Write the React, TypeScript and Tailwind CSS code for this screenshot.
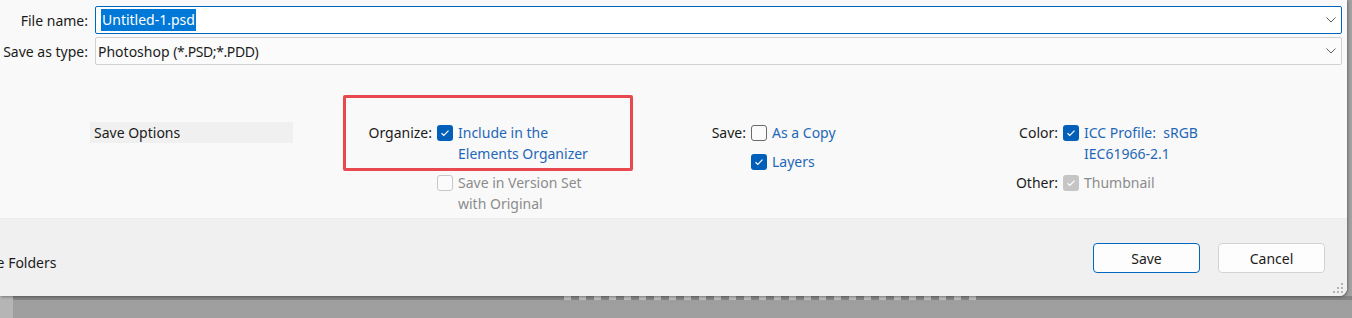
import type { ReactNode } from "react";

const font = { fontFamily: '"Noto Sans", "Open Sans", Arial, sans-serif' };

function Chevron() {
  return (
    <svg width="10" height="6" viewBox="0 0 10 6" className="text-[#5f5f5f]">
      <path d="M0.5 0.5 L5 5 L9.5 0.5" fill="none" stroke="currentColor" strokeWidth="1" />
    </svg>
  );
}

function CheckBox({ checked, disabled }: { checked?: boolean; disabled?: boolean }) {
  if (checked) {
    return (
      <span
        className={`mt-[2.5px] flex h-4 w-4 shrink-0 items-center justify-center rounded-[3px] ${
          disabled ? "bg-[#c5c5c5]" : "bg-[#005fb8]"
        }`}
      >
        <svg width="10" height="8" viewBox="0 0 10 8">
          <path d="M1.5 4.2 L3.8 6.4 L8.5 1.6" fill="none" stroke="white" strokeWidth="1.2" />
        </svg>
      </span>
    );
  }
  return (
    <span
      className={`mt-[2.5px] h-4 w-4 shrink-0 rounded-[3px] border bg-[#fbfbfb] ${
        disabled ? "border-[#c8c8c8]" : "border-[#6a6a6a]"
      }`}
    />
  );
}

function Option({
  checked,
  disabled,
  children,
}: {
  checked?: boolean;
  disabled?: boolean;
  children: ReactNode;
}) {
  return (
    <div className="flex gap-[5px]">
      <CheckBox checked={checked} disabled={disabled} />
      <span className={disabled ? "text-[#8c8c8c]" : "text-[#1f67b8]"}>{children}</span>
    </div>
  );
}

function Group({
  label,
  labelWidth,
  width,
  rows,
}: {
  label: ReactNode[];
  labelWidth: number;
  width: number;
  rows: ReactNode[];
}) {
  return (
    <div className="flex flex-col gap-2">
      {rows.map((row, i) => (
        <div key={i} className="flex">
          <div className="pr-[5px] text-right text-[#1b1b1b]" style={{ width: labelWidth }}>
            {label[i]}
          </div>
          <div style={{ width }}>{row}</div>
        </div>
      ))}
    </div>
  );
}

export default function App() {
  return (
    <div
      className="relative h-[318px] w-[1352px] overflow-hidden bg-gradient-to-b from-[#8b8b8b] to-[#9f9f9f] text-[14px] leading-[21px]"
      style={font}
    >
      <div className="flex h-[296px]">
        <div className="relative flex w-[1347px] flex-col overflow-hidden rounded-br-[8px] bg-[#f9f9f9] shadow-[1px_1px_3px_rgba(0,0,0,0.35)]">
          {/* file rows */}
          <div className="flex flex-col gap-[3px] pt-[6px]">
            <div className="flex items-center">
              <div className="w-[88px] text-right text-[#1b1b1b]">File name:</div>
              <div className="ml-[7px] flex h-[28px] w-[1247px] items-center justify-between rounded-[2px] border border-[#0067c0] bg-white pl-[5px] pr-[5px]">
                <span className="bg-[#0078d7] px-[1px] leading-[22px] text-white">Untitled-1.psd</span>
                <Chevron />
              </div>
            </div>
            <div className="flex items-center">
              <div className="w-[88px] text-right text-[#1b1b1b]">Save as type:</div>
              <div className="ml-[7px] flex h-[28px] w-[1247px] items-center justify-between rounded-[2px] border border-[#d1d1d1] bg-[#fbfbfb] pl-[2px] pr-[5px]">
                <span className="text-[#1b1b1b]">
                  Photoshop <span className="tracking-[-0.4px]">(*.PSD;*.PDD)</span>
                </span>
                <Chevron />
              </div>
            </div>
          </div>

          {/* options */}
          <div className="flex h-[153px] items-start pl-[90px] pt-[57px]">
            <div className="flex h-[21px] w-[203px] items-center bg-[#f0f0f0] pl-[4px] text-[#1b1b1b]">
              Save Options
            </div>
            <Group
              label={["Organize:", ""]}
              labelWidth={144}
              width={217}
              rows={[
                <Option checked>
                  Include in the
                  <br />
                  Elements Organizer
                </Option>,
                <Option disabled>
                  Save in Version Set
                  <br />
                  with Original
                </Option>,
              ]}
            />
            <Group
              label={["Save:", ""]}
              labelWidth={97}
              width={208}
              rows={[<Option>As a Copy</Option>, <Option checked>Layers</Option>]}
            />
            <Group
              label={["Color:", "Other:"]}
              labelWidth={104}
              width={200}
              rows={[
                <Option checked>
                  ICC Profile:&nbsp; sRGB
                  <br />
                  IEC61966-2.1
                </Option>,
                <Option checked disabled>
                  Thumbnail
                </Option>,
              ]}
            />
          </div>

          {/* footer */}
          <div className="flex flex-1 items-start justify-between border-t border-[#ececec] bg-[#f0f0f0] pr-[22px] pt-[24px]">
            <div className="-ml-[26px] mt-[9px] text-[#1b1b1b]">Hide Folders</div>
            <div className="flex gap-[18px]">
              <button className="h-[30px] w-[107px] rounded-[4px] border border-[#0067c0] bg-[#fdfdfd] text-[#1b1b1b]">
                Save
              </button>
              <button className="h-[30px] w-[107px] rounded-[4px] border border-[#d3d3d3] bg-[#fdfdfd] text-[#1b1b1b]">
                Cancel
              </button>
            </div>
          </div>

          {/* resize grip */}
          <div className="absolute bottom-[3px] right-[4px] grid grid-cols-3 gap-[2px]">
            {[0, 0, 1, 0, 1, 1, 1, 1, 1].map((d, i) => (
              <span key={i} className={`h-[2px] w-[2px] ${d ? "bg-[#b4b4b4]" : ""}`} />
            ))}
          </div>

          {/* annotation */}
          <div className="pointer-events-none absolute left-[343px] top-[95px] h-[76px] w-[290px] rounded-[2px] border-[3px] border-[#e9484e]" />
        </div>
        <div className="flex-1 bg-[#a2a2a2]" />
      </div>

      {/* backdrop strip */}
      <div className="flex h-[4px] bg-[#858585]">
        <div className="w-[13px] bg-[#b5b5b5]" />
        <div className="ml-[551px] flex gap-[8px]">
          {Array.from({ length: 28 }).map((_, i) => (
            <span key={i} className="h-[4px] w-[7px] bg-[#bdbdbd]" />
          ))}
        </div>
      </div>
      <div className="h-[18px] w-[13px] bg-[#b5b5b5]" />
    </div>
  );
}
